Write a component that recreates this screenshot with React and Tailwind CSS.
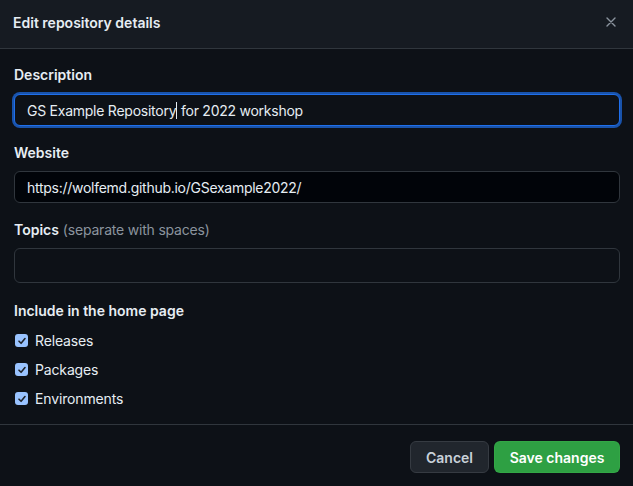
export default function App() {
  const font = { fontFamily: 'Inter, "Liberation Sans", Arial, sans-serif' };
  const Check = ({ label }) => (
    <div className="flex items-center h-[29px]">
      <span className="w-[13px] h-[13px] rounded-[3px] bg-[#99c3ff] flex items-center justify-center ml-[1px]">
        <svg width="10" height="10" viewBox="0 0 10 10" fill="none">
          <path d="M2 5.2 L4.1 7.3 L8 2.6" stroke="#1f2328" strokeWidth="1.6" strokeLinecap="round" strokeLinejoin="round" />
        </svg>
      </span>
      <span className="ml-[7px] text-[14px] tracking-[-0.15px] text-[#e6edf3]">{label}</span>
    </div>
  );
  return (
    <div className="w-[633px] h-[486px] bg-[#0d1117] overflow-hidden flex flex-col" style={font}>
      <div className="h-[49px] shrink-0 bg-[#161b22] border-b border-[#30363d] flex items-center justify-between pl-[13px] pr-[14px] pb-[4px]">
        <span className="text-[14px] font-semibold text-[#e6edf3]">Edit repository details</span>
        <svg width="16" height="16" viewBox="0 0 16 16" fill="none">
          <path d="M4 4 L12 12 M12 4 L4 12" stroke="#8b949e" strokeWidth="1.4" strokeLinecap="round" />
        </svg>
      </div>
      <div className="flex flex-col pl-[14px] pr-[13px] pt-[16px]">
        <label className="h-[20px] leading-[20px] text-[14px] font-semibold text-[#e6edf3]">Description</label>
        <div className="mt-[9px] h-[32px] rounded-[6px] border border-[#1f6feb] ring-2 ring-[#1f6feb]/70 bg-[#0d1117] flex items-center pl-[12px] text-[14px] tracking-[-0.25px] text-[#e6edf3]">
          <span>GS Example Repository</span>
          <span className="inline-block w-[1px] h-[17px] bg-[#e6edf3]" />
          <span className="whitespace-pre"> for 2022 workshop</span>
        </div>
        <label className="mt-[17px] h-[20px] leading-[20px] text-[14px] font-semibold text-[#e6edf3]">Website</label>
        <div className="mt-[8px] h-[32px] rounded-[6px] border border-[#30363d] bg-[#010409] flex items-center pl-[12px] text-[14px] tracking-[-0.27px] text-[#e6edf3]">
          https://wolfemd.github.io/GSexample2022/
        </div>
        <label className="mt-[17px] h-[20px] leading-[20px] text-[14px] text-[#e6edf3]">
          <span className="font-semibold">Topics</span> <span className="text-[#8b949e] tracking-[-0.2px]">(separate with spaces)</span>
        </label>
        <div className="mt-[8px] h-[35px] rounded-[6px] border border-[#30363d] bg-[#0d1117]" />
        <label className="mt-[18px] h-[20px] leading-[20px] text-[14px] font-semibold text-[#e6edf3]">Include in the home page</label>
        <div className="mt-[5px] flex flex-col">
          <Check label="Releases" />
          <Check label="Packages" />
          <Check label="Environments" />
        </div>
      </div>
      <div className="mt-[11px] border-t border-[#30363d] flex justify-end gap-[5px] pr-[13px] pt-[16px]">
        <button className="h-[32px] w-[79px] rounded-[6px] bg-[#21262d] border border-[#363b42] text-[14px] font-semibold text-[#c9d1d9]">Cancel</button>
        <button className="h-[32px] w-[126px] rounded-[6px] bg-[#2ea043] border border-[#3fb950]/30 text-[14px] font-semibold text-white">Save changes</button>
      </div>
    </div>
  );
}
